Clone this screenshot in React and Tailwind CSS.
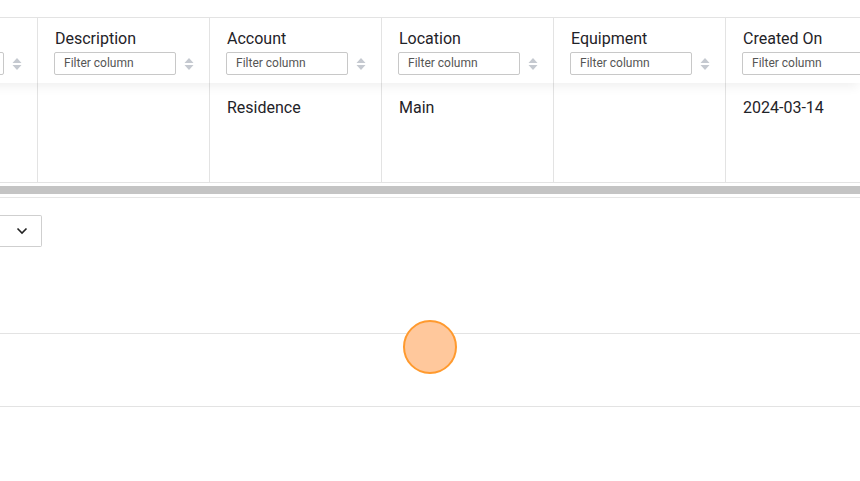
import React from 'react';

const columns = [
  { name: 'Name', value: '' },
  { name: 'Description', value: '' },
  { name: 'Account', value: 'Residence' },
  { name: 'Location', value: 'Main' },
  { name: 'Equipment', value: '' },
  { name: 'Created On', value: '2024-03-14' },
];

const SortIcon = () => (
  <svg width="10" height="14" viewBox="0 0 10 14" className="shrink-0">
    <path d="M5 1 L9.5 6 H0.5 Z" fill="#c5c9d0" />
    <path d="M5 13 L9.5 8 H0.5 Z" fill="#c5c9d0" />
  </svg>
);

const App = () => {
  return (
    <div className="w-[860px] h-[481px] overflow-hidden bg-white text-[#1f2328]" style={{ fontFamily: 'Roboto, "Noto Sans", sans-serif' }}>
      <div className="h-[17px]" />
      {/* table */}
      <div className="border-t border-[#e3e3e3]">
        <div className="relative flex -ml-[134px] h-[65px] bg-white shadow-[0_6px_10px_-2px_rgba(0,0,0,0.06)] z-10">
          {columns.map((c, i) => (
            <div key={c.name} className={`w-[172px] shrink-0 pl-[16px] pt-[10px] ${i < columns.length - 1 ? 'border-r border-[#e3e3e3]' : ''}`}>
              <div className="pl-[1px] text-[16px] leading-[22px]">{c.name}</div>
              <div className="flex items-center gap-[8px] mt-[2px]">
                <div className="w-[122px] h-[23px] border border-[#c8c8c8] rounded-[2px] pl-[9px] text-[12px] leading-[21px] text-[#555]">Filter column</div>
                <SortIcon />
              </div>
            </div>
          ))}
        </div>
        <div className="flex -ml-[134px] h-[100px] border-b border-[#e3e3e3]">
          {columns.map((c, i) => (
            <div key={c.name} className={`w-[172px] shrink-0 pl-[17px] pt-[14px] text-[16px] leading-[22px] ${i < columns.length - 1 ? 'border-r border-[#e3e3e3]' : ''}`}>
              {c.value}
            </div>
          ))}
        </div>
      </div>
      {/* horizontal scrollbar */}
      <div className="h-[3px]" />
      <div className="h-[8px] bg-[#c4c4c4]" />
      <div className="h-[3px]" />
      <div className="border-t border-[#e6e6e6]" />
      {/* bottom panel */}
      <div className="pt-[17px]">
        <div className="w-[42px] h-[32px] border border-[#cfcfcf] border-l-0 rounded-r-[2px] flex items-center justify-end pr-[13px]">
          <svg width="12" height="8" viewBox="0 0 12 8">
            <path d="M1.5 1.5 L6 6 L10.5 1.5" fill="none" stroke="#222" strokeWidth="1.6" />
          </svg>
        </div>
      </div>
      <div className="h-[86px]" />
      <div className="relative border-t border-[#e3e3e3]">
        <div className="absolute left-[403px] top-[-14px] w-[54px] h-[54px] rounded-full bg-[#ffc89c] border-[2px] border-[#ff9a2e]" />
      </div>
      <div className="h-[72px]" />
      <div className="border-t border-[#e3e3e3]" />
    </div>
  );
};

export default App;
